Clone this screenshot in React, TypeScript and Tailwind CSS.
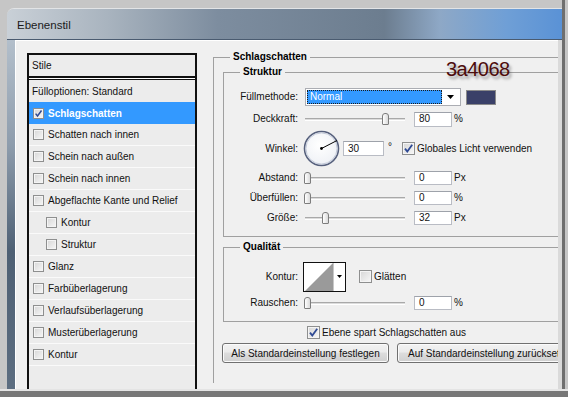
import React from "react";

const styleRows = [
  { label: "Schlagschatten", checked: true, active: true },
  { label: "Schatten nach innen" },
  { label: "Schein nach außen" },
  { label: "Schein nach innen" },
  { label: "Abgeflachte Kante und Relief" },
  { label: "Kontur", indent: true },
  { label: "Struktur", indent: true },
  { label: "Glanz" },
  { label: "Farbüberlagerung" },
  { label: "Verlaufsüberlagerung" },
  { label: "Musterüberlagerung" },
  { label: "Kontur" },
];

function Check({ checked, size = 13 }: { checked?: boolean; size?: number }) {
  return (
    <span
      className="relative inline-flex shrink-0 items-center justify-center border border-[#8e8f8f] bg-[linear-gradient(135deg,#d6d6d6,#f7f7f7)] shadow-[inset_0_0_0_1px_#f4f4f4]"
      style={{ width: size, height: size }}
    >
      {checked && (
        <svg width={size - 2} height={size - 2} viewBox="0 0 11 11">
          <path d="M2 5.6 L4.3 8.6 L9.2 1.8" fill="none" stroke="#2f4a94" strokeWidth="1.8" />
        </svg>
      )}
    </span>
  );
}

function Slider({ pos }: { pos: number }) {
  return (
    <div className="relative h-[14px] w-[101px] shrink-0">
      <div className="absolute left-[1px] right-0 top-[6px] h-[3px] border-t border-b border-t-[#a9a9a9] border-b-white bg-[#dcdcdc]" />
      <div
        className="absolute top-[1px] h-[12px] w-[7px] rounded-t-[3px] rounded-b-[1px] border border-[#7d7d7d] bg-[linear-gradient(90deg,#ffffff,#dadada)]"
        style={{ left: pos }}
      />
    </div>
  );
}

function Field({ value, w = 38, h = 14 }: { value: string; w?: number; h?: number }) {
  return (
    <span
      className="flex shrink-0 items-center border border-[#b9bcc4] border-t-[#9ea2aa] bg-white pl-[4px] leading-[12px] text-[#111]"
      style={{ width: w, height: h }}
    >
      {value}
    </span>
  );
}

function Label({ children }: { children: React.ReactNode }) {
  return <span className="w-[74px] shrink-0 text-right leading-[12px]">{children}</span>;
}

function SliderRow({ label, pos, value, unit, mt }: { label: string; pos: number; value: string; unit: string; mt: string }) {
  return (
    <div className={`flex h-[14px] items-center ${mt}`}>
      <Label>{label}</Label>
      <div className="ml-[6px]">
        <Slider pos={pos} />
      </div>
      <div className="ml-[9px]">
        <Field value={value} />
      </div>
      <span className="ml-[2px] leading-[12px]">{unit}</span>
    </div>
  );
}

function Button({ children, w }: { children: React.ReactNode; w: string }) {
  return (
    <div
      className={`flex h-[20px] shrink-0 items-center justify-center whitespace-nowrap rounded-[3px] border border-[#707070] bg-[linear-gradient(#f2f2f2,#ebebeb_45%,#dddddd_50%,#cfcfcf)] shadow-[inset_0_0_0_1px_#fbfbfb] ${w}`}
    >
      {children}
    </div>
  );
}

export default function App() {
  return (
    <div className="relative flex h-[397px] w-[568px] flex-col overflow-hidden bg-[#c6c6c6] font-['Liberation_Sans',Arial,sans-serif] text-[10px] text-[#111]">
      <div className="flex h-[389px]">
        <div className="w-[7px] shrink-0" />
        {/* window */}
        <div className="mt-[8px] flex w-[555px] shrink-0 flex-col overflow-hidden rounded-tl-[7px] border-t border-[#e2e4e6]">
          <div className="flex h-[31px] shrink-0 items-start border-b border-[#4a5b70] bg-[linear-gradient(90deg,#c9d0d7_0%,#a9b4bf_18%,#7d8d9f_38%,#6c7d8f_68%,#8ea8c6_78%,#6f9fd6_90%,#5a92d6_100%)] pl-[10px] pt-[11px]">
            <span className="text-[11.5px] leading-none text-[#1b1b1b]">Ebenenstil</span>
          </div>
          <div className="flex flex-1">
            <div className="w-[8px] shrink-0 bg-[linear-gradient(#b3bfcb,#8d9cac_30%,#4e6074_60%,#5d6e81)]" />
            {/* client */}
            <div className="flex flex-1 overflow-hidden border-l border-t border-white bg-[#f0f0f0] pl-[11px]">
              {/* styles list */}
              <div className="mt-[12px] flex h-[340px] w-[170px] shrink-0 flex-col border-2 border-b-0 border-[#111] bg-[#ececec]">
                <div className="flex h-[23px] shrink-0 items-center border-b-2 border-[#111] pl-[3px]">Stile</div>
                <div className="h-[1px] shrink-0 bg-white" />
                <div className="h-[1px] shrink-0 bg-[#111]" />
                <div className="flex h-[22px] shrink-0 items-center pl-[3px]">Fülloptionen: Standard</div>
                {styleRows.map((r, i) => (
                  <div
                    key={i}
                    className={`flex h-[22px] shrink-0 items-center gap-[4px] ${
                      r.active ? "bg-[#3399ff] font-bold text-white" : "border-b border-[#fafafa]"
                    } ${r.indent ? "pl-[17px]" : "pl-[4px]"}`}
                  >
                    <Check checked={r.checked} size={11} />
                    <span>{r.label}</span>
                  </div>
                ))}
              </div>

              {/* settings */}
              <fieldset className="ml-[16px] mt-[9px] w-[400px] shrink-0 self-start border-l border-t border-[#a0a0a0] pb-[20px]">
                <legend className="ml-[16px] px-[3px] font-bold leading-[14px] text-black">Schlagschatten</legend>

                <fieldset className="ml-[9px] mt-[1px] w-[390px] border-l border-t border-b border-[#a0a0a0] pb-[11px]">
                  <legend className="ml-[16px] px-[3px] font-bold leading-[14px] text-black">Struktur</legend>

                  <div className="mt-[9px] flex h-[18px] items-center">
                    <Label>Füllmethode:</Label>
                    <div className="ml-[7px] flex h-[18px] w-[156px] items-center border border-[#abadb3] bg-white p-[1px]">
                      <div className="flex h-[14px] w-[135px] items-center border border-dotted border-[#1a1a1a] bg-[#3399ff] pl-[2px] leading-[12px] text-white">
                        Normal
                      </div>
                      <div className="flex flex-1 items-center justify-center">
                        <svg width="7" height="4" viewBox="0 0 7 4">
                          <polygon points="0,0 7,0 3.5,4" fill="#000" />
                        </svg>
                      </div>
                    </div>
                    <div className="ml-[5px] h-[15px] w-[30px] border border-[#8a8a8a] bg-[#3a4068]" />
                  </div>

                  <div className="mt-[5px] flex h-[16px] items-center">
                    <Label>Deckkraft:</Label>
                    <div className="ml-[6px]">
                      <Slider pos={78} />
                    </div>
                    <div className="ml-[9px]">
                      <Field value="80" h={15} />
                    </div>
                    <span className="ml-[2px] leading-[12px]">%</span>
                  </div>

                  <div className="mt-[3px] flex h-[37px] items-center">
                    <Label>Winkel:</Label>
                    <svg className="ml-[5px] shrink-0" width="37" height="37" viewBox="0 0 37 37">
                      <defs>
                        <radialGradient id="dial" cx="45%" cy="40%" r="65%">
                          <stop offset="0%" stopColor="#ffffff" />
                          <stop offset="80%" stopColor="#f1f3f7" />
                          <stop offset="100%" stopColor="#cdd3df" />
                        </radialGradient>
                      </defs>
                      <circle cx="18.5" cy="18.5" r="17" fill="url(#dial)" stroke="#56607c" strokeWidth="1.6" />
                      <circle cx="18.5" cy="18.5" r="15.6" fill="none" stroke="#c3cad9" strokeWidth="1" />
                      <line x1="18.5" y1="18.5" x2="34" y2="10.5" stroke="#000" strokeWidth="1" />
                      <circle cx="18.5" cy="18.5" r="1.4" fill="#000" />
                    </svg>
                    <div className="ml-[3px]">
                      <Field value="30" w={41} h={15} />
                    </div>
                    <span className="ml-[4px] self-start pt-[11px] leading-[12px]">°</span>
                    <div className="ml-[10px] flex items-center gap-[2px]">
                      <Check checked />
                      <span className="leading-[12px]">Globales Licht verwenden</span>
                    </div>
                  </div>

                  <SliderRow label="Abstand:" pos={0} value="0" unit="Px" mt="mt-[4px]" />
                  <SliderRow label="Überfüllen:" pos={0} value="0" unit="%" mt="mt-[6px]" />
                  <SliderRow label="Größe:" pos={18} value="32" unit="Px" mt="mt-[6px]" />
                </fieldset>

                <fieldset className="ml-[9px] mt-[3px] w-[390px] border-l border-t border-b border-[#a0a0a0] pb-[11px]">
                  <legend className="ml-[16px] px-[3px] font-bold leading-[14px] text-black">Qualität</legend>

                  <div className="mt-[8px] flex h-[30px] items-center">
                    <Label>Kontur:</Label>
                    <div className="ml-[5px] flex h-[30px] w-[43px] shrink-0 border border-[#111] bg-white">
                      <svg width="29" height="28" viewBox="0 0 29 28">
                        <polygon points="1,28 29,0 29,28" fill="#9a9a9a" />
                      </svg>
                      <div className="flex flex-1 items-start justify-center border-l border-[#c8c8c8] pt-[12px]">
                        <svg width="5" height="3" viewBox="0 0 5 3">
                          <polygon points="0,0 5,0 2.5,3" fill="#000" />
                        </svg>
                      </div>
                    </div>
                    <div className="ml-[13px] flex items-center gap-[2px] self-start pt-[8px]">
                      <Check />
                      <span className="leading-[12px]">Glätten</span>
                    </div>
                  </div>

                  <SliderRow label="Rauschen:" pos={0} value="0" unit="%" mt="mt-[4px]" />
                </fieldset>

                <div className="ml-[93px] mt-[4px] flex h-[13px] items-center gap-[2px]">
                  <Check checked />
                  <span className="leading-[12px]">Ebene spart Schlagschatten aus</span>
                </div>

                <div className="ml-[8px] mt-[4px] flex gap-[8px]">
                  <Button w="w-[167px]">Als Standardeinstellung festlegen</Button>
                  <Button w="w-[190px]">Auf Standardeinstellung zurücksetzen</Button>
                </div>
              </fieldset>
            </div>
            <div className="w-[4px] shrink-0 bg-[#dadada]" />
          </div>
        </div>
        <div className="w-[3px] shrink-0 bg-[#6f6f6f]" />
        <div className="flex-1" />
      </div>
      <div className="h-[8px] shrink-0 border-t-2 border-[#e4e4e4] bg-[#777]" />

      {/* handwritten colour note over the dialog */}
      <span className="absolute left-[446px] top-[59px] text-[20px] leading-[20px] tracking-[-0.5px] text-[#4d0c0c] [text-shadow:2px_3px_3px_rgba(0,0,0,0.35)]">
        3a4068
      </span>
    </div>
  );
}
